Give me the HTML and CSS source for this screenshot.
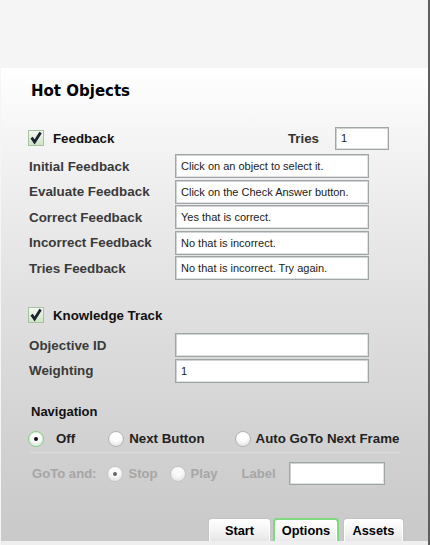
FILE: index.html
```html
<!DOCTYPE html>
<html>
<head>
<meta charset="utf-8">
<link rel="stylesheet" href="styles.css">
</head>
<body>
<div class="app">
  <div class="top"></div>
  <div class="panel">
    <div class="title">Hot Objects</div>

    <div class="check-row feedback-row">
      <span class="check"><svg viewBox="0 0 16 16" width="16" height="16"><defs><linearGradient id="cg" x1="0" y1="0" x2="0" y2="1"><stop offset="0" stop-color="#f6fbf2"/><stop offset="1" stop-color="#cde3c4"/></linearGradient></defs><rect x="0.5" y="0.5" width="15" height="15" fill="url(#cg)" stroke="#a7c2a2"/><path d="M3.6 7.6 L6.6 12 L12.6 2.6" fill="none" stroke="#1c2230" stroke-width="2.8" stroke-linejoin="miter"/></svg></span>
      <span class="check-label">Feedback</span>
      <span class="tries-label">Tries</span>
      <span class="box tries-box">1</span>
    </div>

    <div class="fields">
      <span class="label">Initial Feedback</span><span class="box">Click on an object to select it.</span>
      <span class="label">Evaluate Feedback</span><span class="box">Click on the Check Answer button.</span>
      <span class="label">Correct Feedback</span><span class="box">Yes that is correct.</span>
      <span class="label">Incorrect Feedback</span><span class="box">No that is incorrect.</span>
      <span class="label">Tries Feedback</span><span class="box">No that is incorrect. Try again.</span>
    </div>

    <div class="check-row knowledge-row">
      <span class="check"><svg viewBox="0 0 16 16" width="16" height="16"><defs><linearGradient id="cg2" x1="0" y1="0" x2="0" y2="1"><stop offset="0" stop-color="#f6fbf2"/><stop offset="1" stop-color="#cde3c4"/></linearGradient></defs><rect x="0.5" y="0.5" width="15" height="15" fill="url(#cg2)" stroke="#a7c2a2"/><path d="M3.6 7.6 L6.6 12 L12.6 2.6" fill="none" stroke="#1c2230" stroke-width="2.8" stroke-linejoin="miter"/></svg></span>
      <span class="check-label">Knowledge Track</span>
    </div>

    <div class="fields fields2">
      <span class="label">Objective ID</span><span class="box"></span>
      <span class="label">Weighting</span><span class="box">1</span>
    </div>

    <div class="nav-title">Navigation</div>

    <div class="radio-row">
      <span class="opt opt-off"><span class="radio on"></span><span class="opt-label off-label">Off</span></span>
      <span class="opt opt-next"><span class="radio"></span><span class="opt-label">Next Button</span></span>
      <span class="opt opt-auto"><span class="radio"></span><span class="opt-label">Auto GoTo Next Frame</span></span>
    </div>
    <div class="sep"></div>

    <div class="goto-row">
      <span class="goto-label">GoTo and:</span>
      <span class="radio dis on stop-radio"></span><span class="dis-label">Stop</span>
      <span class="radio dis play-radio"></span><span class="dis-label">Play</span>
      <span class="dis-label label-label">Label</span>
      <span class="box label-box"></span>
    </div>

    <div class="tabs">
      <span class="tab tab-start">Start</span>
      <span class="tab tab-options">Options</span>
      <span class="tab tab-assets">Assets</span>
    </div>
  </div>
  <div class="bottom"></div>
</div>
</body>
</html>
```
FILE: styles.css
```css
html, body {
  margin: 0;
  padding: 0;
  background: #f5f5f5;
}
.app {
  width: 430px;
  height: 545px;
  box-sizing: border-box;
  border-right: 2px solid #5e5e5e;
  display: flex;
  flex-direction: column;
  font-family: "Liberation Sans", Arial, sans-serif;
}
.top {
  height: 68px;
  flex: none;
}
.panel {
  flex: 1;
  margin-left: 1px;
  background: linear-gradient(#ffffff 0%, #f1f1f1 20%, #e0e0e0 50%, #d2d2d2 78%, #c9c9c9 100%);
  padding: 14px 0 0 27px;
  display: flex;
  flex-direction: column;
}
.bottom {
  height: 4px;
  flex: none;
  margin-left: 1px;
  background: #efefef;
}
.title {
  font-family: "DejaVu Sans", Verdana, sans-serif;
  font-weight: bold;
  font-size: 15px;
  line-height: 18px;
  color: #000;
  margin-left: 3px;
}
.check-row {
  display: flex;
  align-items: center;
  height: 24px;
  width: 361px;
}
.feedback-row { margin-top: 26px; }
.knowledge-row { margin-top: 23px; }
.check {
  width: 16px;
  height: 16px;
  flex: none;
  display: block;
}
.check svg { display: block; }
.check-label {
  margin-left: 9px;
  font-weight: bold;
  font-size: 13.3px;
  color: #111;
}
.tries-label {
  margin-left: auto;
  font-weight: bold;
  font-size: 13.3px;
  color: #333;
}
.box {
  box-sizing: border-box;
  height: 24px;
  background: #fff;
  border: 1px solid #a0a6a6;
  box-shadow: inset 1px 1px 0 #cfd3d3, inset -1px -1px 0 #dfe2e2;
  font-size: 11px;
  color: #1a1a1a;
  line-height: 22px;
  padding-left: 5px;
  white-space: nowrap;
  overflow: hidden;
}
.tries-box {
  width: 54px;
  height: 23px;
  line-height: 21px;
  margin-left: 16px;
}
.fields {
  display: grid;
  grid-template-columns: 147px 194px;
  grid-auto-rows: 24px;
  row-gap: 1.5px;
  margin-top: 4px;
  align-items: center;
}
.fields2 { margin-top: 6px; }
.label {
  padding-left: 1px;
  font-weight: bold;
  font-size: 13.4px;
  color: #3a3a3a;
}
.nav-title {
  margin-top: 20px;
  margin-left: 3px;
  font-weight: bold;
  font-size: 13px;
  line-height: 18px;
  color: #111;
}
.radio-row {
  margin-top: 8px;
  height: 20px;
  display: flex;
  align-items: center;
}
.opt {
  display: flex;
  align-items: center;
}
.opt-next { margin-left: 33px; }
.opt-auto { margin-left: 30px; }
.opt-label {
  margin-left: 5px;
  font-weight: bold;
  font-size: 13.3px;
  color: #222;
}
.opt-label.off-label { margin-left: 12px; }
.radio {
  position: relative;
  width: 16px;
  height: 16px;
  box-sizing: border-box;
  flex: none;
  border-radius: 50%;
  border: 1px solid #b4b4b4;
  background: radial-gradient(circle at 50% 30%, #ffffff 35%, #e6e6e6 80%, #d6d6d6 100%);
}
.radio.on {
  border-color: #8ccc8c;
  box-shadow: inset 0 0 0 1px #d8f2d8;
}
.radio.on::after {
  content: "";
  position: absolute;
  left: 5px;
  top: 5px;
  width: 4px;
  height: 4px;
  border-radius: 50%;
  background: #111;
}
.radio.dis {
  border-color: #c6c6c6;
  background: radial-gradient(circle at 50% 30%, #fafafa 35%, #e4e4e4 85%, #d8d8d8 100%);
  box-shadow: none;
}
.radio.dis.on::after { background: #666; }
.sep {
  margin-top: 3px;
  margin-left: 2px;
  width: 370px;
  height: 1px;
  background: rgba(255, 255, 255, 0.25);
}
.goto-row {
  margin-top: 9px;
  height: 24px;
  display: flex;
  align-items: center;
  font-weight: bold;
  font-size: 13.1px;
  color: #a6a6a6;
}
.goto-label { margin-left: 4px; }
.stop-radio { margin-left: 11px; }
.play-radio { margin-left: 12px; }
.dis-label { margin-left: 5px; }
.label-label { margin-left: 24px; }
.label-box {
  width: 96px;
  height: 23px;
  margin-left: 13px;
}
.tabs {
  margin-top: auto;
  display: flex;
  justify-content: flex-end;
  padding-right: 24px;
  height: 23px;
}
.tab {
  box-sizing: border-box;
  height: 23px;
  border: 1px solid #c4c4c4;
  border-bottom: none;
  border-radius: 4px 4px 0 0;
  background: linear-gradient(#ffffff, #f2f2f2 60%, #e6e6e6);
  box-shadow: inset 1px 1px 0 #fff, inset -1px 0 0 #fff;
  font-weight: bold;
  font-size: 12.8px;
  color: #000;
  text-align: center;
  line-height: 23px;
}
.tab-start { width: 63px; }
.tab-options {
  width: 66px;
  margin-left: 2px;
  border: 2px solid #7fd97f;
  border-bottom: none;
  line-height: 21px;
  background: linear-gradient(#ffffff, #f4f4f4 60%, #eaeaea);
}
.tab-assets {
  width: 61px;
  margin-left: 4px;
}
```
